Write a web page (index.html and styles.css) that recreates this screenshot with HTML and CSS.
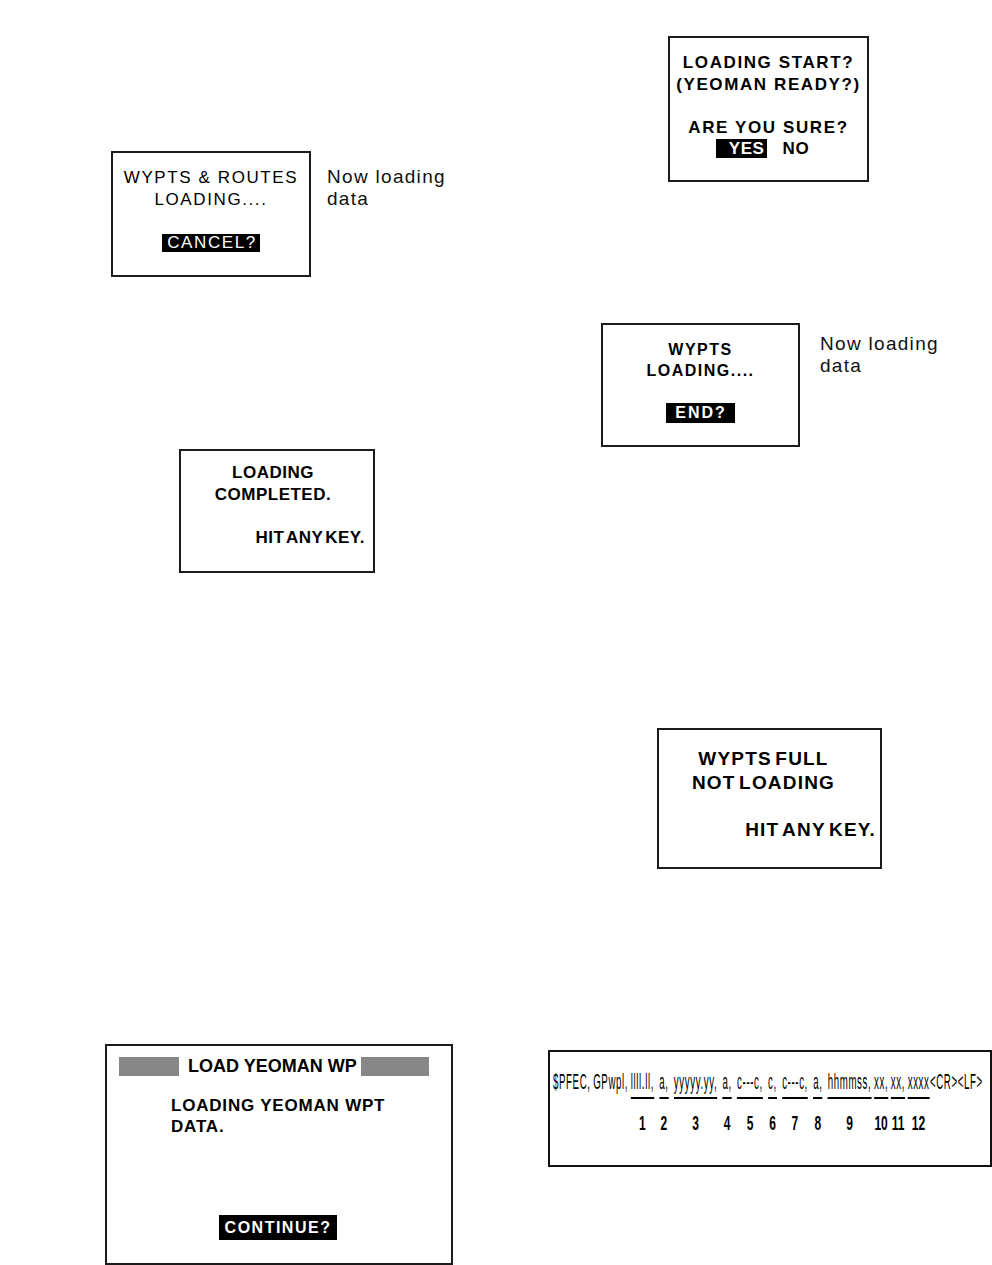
FILE: index.html
```html
<!DOCTYPE html>
<html lang="en">
<head>
  <meta charset="UTF-8" />
  <meta name="viewport" content="width=device-width, initial-scale=1.0" />
  <title>Waypoint Loading Screens</title>
  <link rel="stylesheet" href="styles.css">
</head>
<body>
  <div class="page">
    <div class="col">
      <div class="fig fig-routes">
        <div class="lcd lcd-routes">
          <p class="line">WYPTS &amp; ROUTES</p>
          <p class="line">LOADING....</p>
          <span class="hl hl-cancel">CANCEL?</span>
        </div>
        <p class="note">Now loading<br>data</p>
      </div>

      <div class="fig fig-complete">
        <div class="lcd lcd-complete">
          <p class="line">LOADING</p>
          <p class="line">COMPLETED.</p>
          <p class="line line-key">HIT ANY KEY.</p>
        </div>
      </div>

      <div class="fig fig-yeoman">
        <div class="lcd lcd-yeoman">
          <div class="title-row">
            <span class="bar bar-left"></span>
            <span class="title">LOAD YEOMAN WP</span>
            <span class="bar bar-right"></span>
          </div>
          <p class="line line-first">LOADING YEOMAN WPT</p>
          <p class="line">DATA.</p>
          <span class="hl hl-continue">CONTINUE?</span>
        </div>
      </div>
    </div>

    <div class="col">
      <div class="fig fig-start">
        <div class="lcd lcd-start">
          <p class="line">LOADING START?</p>
          <p class="line">(YEOMAN READY?)</p>
          <p class="line line-sure">ARE YOU SURE?</p>
          <div class="choice">
            <span class="hl hl-yes">YES</span>
            <span class="no">NO</span>
          </div>
        </div>
      </div>

      <div class="fig fig-end">
        <div class="lcd lcd-end">
          <p class="line">WYPTS</p>
          <p class="line">LOADING....</p>
          <span class="hl hl-end">END?</span>
        </div>
        <p class="note">Now loading<br>data</p>
      </div>

      <div class="fig fig-full">
        <div class="lcd lcd-full">
          <p class="line">WYPTS FULL</p>
          <p class="line">NOT LOADING</p>
          <p class="line line-key">HIT ANY KEY.</p>
        </div>
      </div>

      <div class="fig fig-sentence">
        <div class="sentence-box">
          <div class="sentence">
            <span class="plain plain-head">$PFEC,</span>
            <span class="plain plain-head">GPwpl,</span>
            <span class="field"><span class="txt">llll.ll,</span><span class="num">1</span></span>
            <span class="field"><span class="txt">a,</span><span class="num">2</span></span>
            <span class="field"><span class="txt">yyyyy.yy,</span><span class="num">3</span></span>
            <span class="field"><span class="txt">a,</span><span class="num">4</span></span>
            <span class="field"><span class="txt">c---c,</span><span class="num">5</span></span>
            <span class="field"><span class="txt">c,</span><span class="num">6</span></span>
            <span class="field"><span class="txt">c---c,</span><span class="num">7</span></span>
            <span class="field"><span class="txt">a,</span><span class="num">8</span></span>
            <span class="field"><span class="txt">hhmmss,</span><span class="num">9</span></span>
            <span class="field field-tight"><span class="txt">xx,</span><span class="num">10</span></span>
            <span class="field field-tight"><span class="txt">xx,</span><span class="num">11</span></span>
            <span class="field field-tight"><span class="txt">xxxx</span><span class="num">12</span></span>
            <span class="plain plain-end">&lt;CR&gt;&lt;LF&gt;</span>
          </div>
        </div>
      </div>
    </div>
  </div>
</body>
</html>
```

FILE: styles.css
```css
* {
  box-sizing: border-box;
}
body {
  margin: 0;
  background: #fff;
  color: #000;
  font-family: 'Liberation Sans', Arial, sans-serif;
}
p {
  margin: 0;
}
.page {
  width: 992px;
  height: 1265px;
  display: grid;
  grid-template-columns: 496px 496px;
  overflow: hidden;
}
.col {
  display: flex;
  flex-direction: column;
  align-items: flex-start;
}
.fig {
  display: flex;
  align-items: flex-start;
}

/* lcd screens */
.lcd {
  border: 2px solid #1c1c1c;
  background: #fff;
  display: flex;
  flex-direction: column;
  align-items: center;
  flex-shrink: 0;
}
.hl {
  background: #000;
  color: #fff;
}
.note {
  font-size: 19px;
  line-height: 22px;
  letter-spacing: 1.3px;
  color: #111;
}

/* wypts & routes */
.fig-routes {
  margin: 151px 0 0 111px;
  gap: 16px;
}
.fig-routes .note {
  margin-top: 15px;
}
.lcd-routes {
  width: 200px;
  height: 126px;
  padding-top: 14px;
  font-size: 17px;
  letter-spacing: 1.6px;
}
.lcd-routes .line {
  line-height: 22px;
}
.hl-cancel {
  margin-top: 23px;
  line-height: 18px;
  padding: 0 3px 0 5px;
}

/* loading completed */
.fig-complete {
  margin: 172px 0 0 179px;
}
.lcd-complete {
  width: 196px;
  height: 124px;
  padding-top: 11px;
  font-size: 17px;
  font-weight: bold;
  letter-spacing: 0.5px;
  word-spacing: -3px;
}
.lcd-complete .line {
  line-height: 22px;
  margin-right: 8px;
}
.lcd-complete .line-key {
  align-self: flex-end;
  margin: 21px 8px 0 0;
}

/* load yeoman wp */
.fig-yeoman {
  margin: 471px 0 0 105px;
}
.lcd-yeoman {
  width: 348px;
  height: 221px;
  padding: 11px 0 0 12px;
  align-items: flex-start;
  font-weight: bold;
}
.title-row {
  display: flex;
  align-items: center;
}
.bar {
  height: 19px;
  background: #878787;
}
.bar-left {
  width: 60px;
}
.bar-right {
  width: 68px;
}
.title {
  font-size: 18px;
  line-height: 19px;
  margin: 0 4px 0 9px;
}
.lcd-yeoman .line {
  font-size: 17px;
  line-height: 21px;
  letter-spacing: 0.8px;
  margin-left: 52px;
}
.lcd-yeoman .line-first {
  margin-top: 19px;
}
.hl-continue {
  align-self: center;
  margin: 78px 14px 0 0;
  font-size: 16px;
  line-height: 25px;
  letter-spacing: 1.5px;
  padding: 0 6px 0 6px;
}

/* loading start */
.fig-start {
  margin: 36px 0 0 172px;
}
.lcd-start {
  width: 201px;
  height: 146px;
  padding-top: 14px;
  font-size: 17px;
  font-weight: bold;
  letter-spacing: 1.6px;
}
.lcd-start .line {
  line-height: 22px;
}
.lcd-start .line-sure {
  margin-top: 21px;
}
.choice {
  display: flex;
  line-height: 19px;
  margin-right: 12px;
  letter-spacing: 0.6px;
}
.hl-yes {
  padding: 0 2px 0 13px;
}
.no {
  margin-left: 16px;
}

/* wypts loading end */
.fig-end {
  margin: 141px 0 0 105px;
  gap: 20px;
}
.fig-end .note {
  margin-top: 10px;
}
.lcd-end {
  width: 199px;
  height: 124px;
  padding-top: 14px;
  font-size: 16px;
  font-weight: bold;
  letter-spacing: 1.5px;
}
.lcd-end .line {
  line-height: 21px;
}
.hl-end {
  margin-top: 22px;
  line-height: 20px;
  letter-spacing: 2px;
  padding: 0 8px 0 9px;
}

/* wypts full */
.fig-full {
  margin: 281px 0 0 161px;
}
.lcd-full {
  width: 225px;
  height: 141px;
  padding-top: 17px;
  font-size: 19px;
  font-weight: bold;
  letter-spacing: 1.2px;
  word-spacing: -3px;
}
.lcd-full .line {
  line-height: 24px;
  margin-right: 12px;
}
.lcd-full .line-key {
  align-self: flex-end;
  margin: 23px 4px 0 0;
}

/* sentence format */
.fig-sentence {
  margin: 181px 0 0 52px;
}
.sentence-box {
  width: 444px;
  height: 117px;
  border: 2px solid #111;
  overflow: hidden;
  padding: 19px 0 0 3px;
}
.sentence {
  display: flex;
  align-items: flex-start;
  gap: 12px;
  width: max-content;
  transform: scaleX(0.44);
  transform-origin: left top;
  font-size: 22px;
  letter-spacing: 1.4px;
}
.plain,
.txt {
  line-height: 22px;
}
.plain-head {
  margin-right: -6px;
}
.field {
  display: flex;
  flex-direction: column;
  align-items: center;
}
.field-tight {
  margin-left: -6px;
}
.plain-end {
  margin-left: -11px;
}
.txt {
  padding-bottom: 4px;
  border-bottom: 2px solid #000;
}
.num {
  margin-top: 13px;
  font-size: 21px;
  line-height: 21px;
  font-weight: bold;
  letter-spacing: 0;
  transform: scaleX(1.3);
}
```
